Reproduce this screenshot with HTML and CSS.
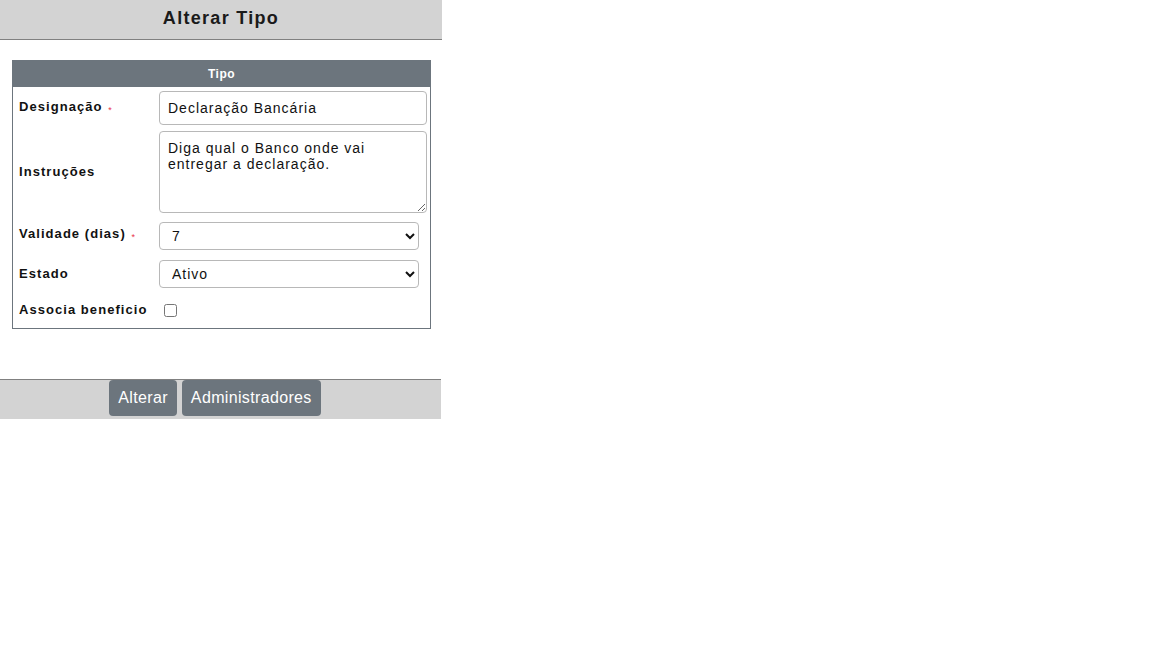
FILE: index.html
```html
<!DOCTYPE html>
<html lang="pt">
<head>
<meta charset="utf-8">
<title>Alterar Tipo</title>
<link rel="stylesheet" href="styles.css">
</head>
<body>
<div class="page">
  <header class="top">
    <h1 class="title">Alterar Tipo</h1>
  </header>
  <main class="content">
    <section class="panel">
      <div class="panel-head">Tipo</div>
      <div class="form">
        <div class="row r1">
          <label class="lbl" for="des">Designação <span class="req">*</span></label>
          <input id="des" class="inp" type="text" value="Declaração Bancária">
        </div>
        <div class="row r2">
          <label class="lbl" for="ins">Instruções</label>
          <textarea id="ins" class="ta">Diga qual o Banco onde vai entregar a declaração.</textarea>
        </div>
        <div class="row r3">
          <label class="lbl" for="val">Validade (dias) <span class="req">*</span></label>
          <select id="val" class="sel"><option>7</option></select>
        </div>
        <div class="row r4">
          <label class="lbl" for="est">Estado</label>
          <select id="est" class="sel"><option>Ativo</option></select>
        </div>
        <div class="row r5">
          <label class="lbl" for="ben">Associa beneficio</label>
          <span class="check"><input id="ben" class="cb" type="checkbox"></span>
        </div>
      </div>
    </section>
  </main>
  <footer class="bottom">
    <button class="btn" type="button">Alterar</button>
    <button class="btn" type="button">Administradores</button>
  </footer>
</div>
</body>
</html>
```
FILE: styles.css
```css
html, body {
  margin: 0;
  padding: 0;
  background: #fff;
  font-family: "Liberation Sans", Arial, sans-serif;
  color: #111;
}
.page {
  width: 442px;
}
.top {
  background: #d3d3d3;
  height: 39px;
  border-bottom: 1px solid #808080;
  display: flex;
  align-items: center;
  justify-content: center;
}
.title {
  margin: 0;
  font-size: 18px;
  font-weight: bold;
  letter-spacing: 1.3px;
  color: #1a1a1a;
  padding-bottom: 2px;
}
.content {
  padding: 20px 11px 50px 12px;
}
.panel {
  width: 419px;
  box-sizing: border-box;
  border: 1px solid #6c757d;
}
.panel-head {
  background: #6c757d;
  color: #fff;
  font-size: 12px;
  font-weight: bold;
  letter-spacing: 0.5px;
  text-align: center;
  height: 27px;
  line-height: 29px;
  margin: -1px -1px 0 -1px;
}
.form {
  display: flex;
  flex-direction: column;
  padding: 4px 2px 6px 6px;
}
.row {
  display: flex;
  align-items: center;
}
.r2 { margin-top: 6px; }
.r3 { margin-top: 9px; }
.r4 { margin-top: 10px; }
.r5 { margin-top: 10px; height: 24px; }
.lbl {
  width: 140px;
  flex: none;
  font-size: 13px;
  font-weight: bold;
  letter-spacing: 1.05px;
  color: #111;
  white-space: nowrap;
  padding-bottom: 2px;
}
.r3 .lbl { padding-bottom: 4px; }
.req {
  color: #e8334a;
  font-size: 9px;
  font-weight: normal;
  vertical-align: -2px;
  margin-left: 1px;
}
.inp, .ta, .sel {
  font-family: "Liberation Sans", Arial, sans-serif;
  font-size: 14px;
  letter-spacing: 1px;
  color: #111;
  border: 1px solid #b8b8b8;
  border-radius: 4px;
  box-sizing: border-box;
  background: #fff;
  margin: 0;
}
.inp {
  width: 268px;
  height: 34px;
  padding: 0 8px;
}
.ta {
  width: 268px;
  height: 82px;
  padding: 8px 8px;
  line-height: 16px;
  resize: vertical;
}
.sel {
  width: 260px;
  height: 28px;
  padding: 0 8px;
}
.check {
  display: flex;
  align-items: center;
  padding-left: 5px;
}
.cb {
  width: 13px;
  height: 13px;
  margin: 0;
}
.bottom {
  background: #d3d3d3;
  border-top: 1px solid #808080;
  height: 39px;
  width: 430px;
  display: flex;
  justify-content: center;
  align-items: flex-start;
  gap: 5px;
  padding-right: 11px;
}
.btn {
  background: #6c757d;
  color: #fff;
  border: none;
  border-radius: 4px;
  height: 36px;
  padding: 0 9px;
  font-family: "Liberation Sans", Arial, sans-serif;
  font-size: 16px;
  letter-spacing: 0.35px;
}
```
